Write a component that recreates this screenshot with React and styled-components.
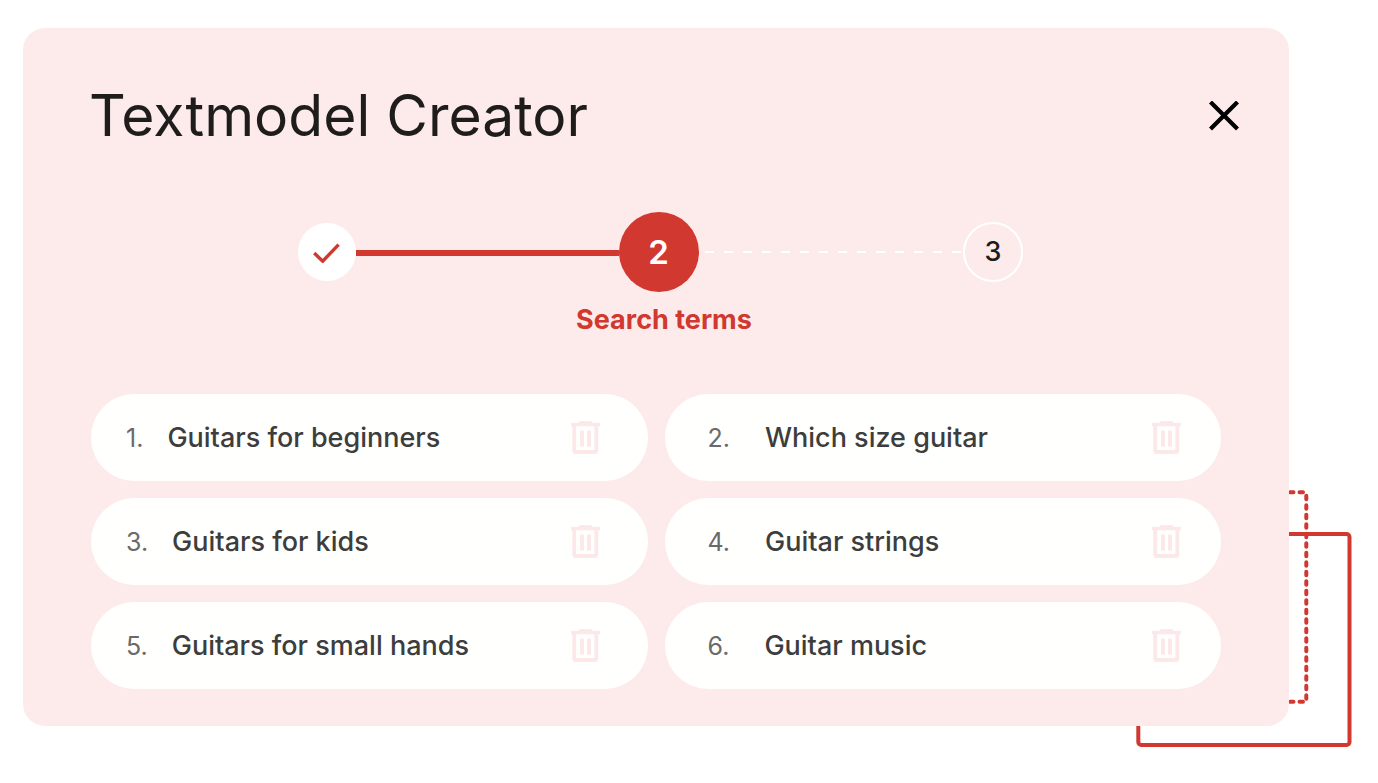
import React from 'react';
import styled, { createGlobalStyle } from 'styled-components';

const RED = '#d1382f';
const PINK = '#fdebeb';

const GlobalStyle = createGlobalStyle`
    * {
        box-sizing: border-box;
    }

    body {
        margin: 0;
        background: #fff;
        color: #1f1d1c;
        font-family: Inter, 'Liberation Sans', sans-serif;
    }
`;

const Page = styled.main`
    padding: 28px 89px 57px 23px;
`;

const Stage = styled.div`
    position: relative;
`;

const Frames = styled.svg`
    position: absolute;
    right: -64px;
    bottom: -22px;
    width: 224px;
    height: 260px;
    fill: none;
    stroke: ${RED};
    stroke-width: 4;
`;

const Card = styled.section`
    position: relative;
    padding: 56px 68px 37px;
    border-radius: 22px;
    background: ${PINK};
`;

const Header = styled.header`
    display: flex;
    align-items: center;
    justify-content: space-between;
    margin: 0 -18px 64px -2px;
`;

const Title = styled.h1`
    margin: 0;
    font-size: 57px;
    font-weight: 400;
    line-height: 64px;
`;

const IconButton = styled.button`
    display: flex;
    flex: none;
    padding: 0;
    border: 0;
    background: none;
    cursor: pointer;
`;

const Stepper = styled.ol`
    display: flex;
    align-items: center;
    margin: 0;
    padding: 0 198px 0 207px;
    list-style: none;
`;

const sizes = { done: 58, active: 80, next: 60 };
const fills = { done: '#fff', active: RED, next: 'transparent' };

const Step = styled.li`
    display: flex;
    flex: none;
    align-items: center;
    justify-content: center;
    width: ${props => sizes[props.$state]}px;
    height: ${props => sizes[props.$state]}px;
    border: ${props => (props.$state === 'next' ? '2px solid #fff' : '0')};
    border-radius: 50%;
    background: ${props => fills[props.$state]};
    color: ${props => (props.$state === 'active' ? '#fff' : 'inherit')};
    font-size: ${props => (props.$state === 'active' ? 33 : 27)}px;
    font-weight: ${props => (props.$state === 'active' ? 600 : 500)};
    line-height: 32px;
`;

const Connector = styled.li`
    flex: 1;
    height: ${props => (props.$dashed ? 2 : 6)}px;
    margin-top: ${props => (props.$dashed ? 0 : 2)}px;
    margin-left: ${props => (props.$dashed ? 2 : 0)}px;
    background: ${props =>
        props.$dashed
            ? 'repeating-linear-gradient(90deg, transparent 0 4px, #fff 4px 13px, transparent 13px 19px)'
            : RED};
`;

const StepLabel = styled.p`
    margin: 12px 0 58px;
    padding-left: 16px;
    color: ${RED};
    font-size: 27px;
    font-weight: 700;
    line-height: 32px;
    text-align: center;
`;

const Terms = styled.ol`
    display: grid;
    grid-template-columns: 1fr 1fr;
    gap: 17px;
    margin: 0;
    padding: 0;
    list-style: none;
`;

const Term = styled.li`
    display: flex;
    align-items: center;
    height: 87px;
    padding: 0 48px 0 35px;
    border-radius: 44px;
    background: #fffffe;
    font-size: 27px;
    line-height: 32px;

    &:nth-child(even) {
        padding: 0 40px 0 43px;
    }
`;

const TermNumber = styled.span`
    margin-right: 24px;
    color: #6a6a6a;
    font-size: 25px;

    ${Term}:nth-child(even) & {
        margin-right: 35px;
    }
`;

const TermText = styled.span`
    flex: 1;
    color: #3d3d3d;
    font-weight: 500;
`;

const CloseIcon = () => (
    <svg width="30" height="30" viewBox="0 0 30 30" aria-hidden="true">
        <path d="M1.5 1L28.5 28M28.5 1L1.5 28" stroke="#000" strokeWidth="4.2" />
    </svg>
);

const CheckIcon = () => (
    <svg width="28" height="22" viewBox="0 0 28 22" aria-label="Done">
        <path d="M1.2 12L9.7 20.2L25.6 3.6" fill="none" stroke={RED} strokeWidth="3.4" />
    </svg>
);

const TrashIcon = () => (
    <svg width="29" height="34" viewBox="0 0 29 34" fill="none" stroke="#fce8e8" aria-hidden="true">
        <path d="M0 3.6H29" strokeWidth="3.4" />
        <path d="M8 1.8Q14.5 0.6 21 1.8" strokeWidth="3" />
        <path d="M3.2 4V29.5Q3.2 31 4.7 31H23.8Q25.3 31 25.3 29.5V4" strokeWidth="3.8" />
        <path d="M11 9.5V25.5M18 9.5V25.5" strokeWidth="3.8" />
    </svg>
);

const terms = [
    'Guitars for beginners',
    'Which size guitar',
    'Guitars for kids',
    'Guitar strings',
    'Guitars for small hands',
    'Guitar music',
];

const App = () => (
    <Page>
        <GlobalStyle />
        <Stage>
            <Frames viewBox="0 0 224 260" aria-hidden="true">
                <rect x="9.3" y="46" width="211.2" height="211" rx="3" />
                <g strokeLinecap="round" strokeDasharray="3.5 6">
                    <path d="M151.5 4.3H176" />
                    <path d="M177.3 7.7V211" />
                    <path d="M151.5 213.7H176" />
                </g>
            </Frames>
            <Card>
                <Header>
                    <Title>Textmodel Creator</Title>
                    <IconButton type="button" aria-label="Close">
                        <CloseIcon />
                    </IconButton>
                </Header>
                <Stepper>
                    <Step $state="done">
                        <CheckIcon />
                    </Step>
                    <Connector aria-hidden="true" />
                    <Step $state="active" aria-current="step">
                        2
                    </Step>
                    <Connector $dashed aria-hidden="true" />
                    <Step $state="next">3</Step>
                </Stepper>
                <StepLabel>Search terms</StepLabel>
                <Terms>
                    {terms.map((term, i) => (
                        <Term key={term}>
                            <TermNumber>{i + 1}.</TermNumber>
                            <TermText>{term}</TermText>
                            <IconButton type="button" aria-label={`Delete ${term}`}>
                                <TrashIcon />
                            </IconButton>
                        </Term>
                    ))}
                </Terms>
            </Card>
        </Stage>
    </Page>
);

export default App;
